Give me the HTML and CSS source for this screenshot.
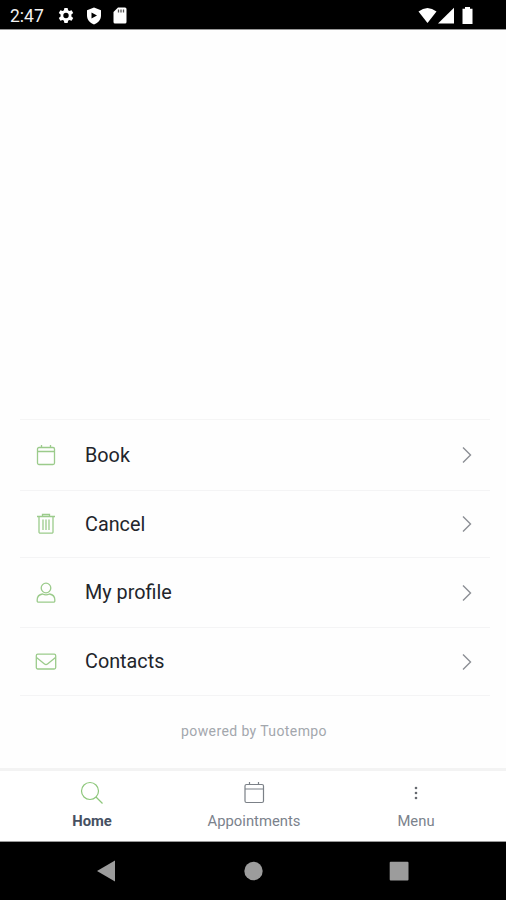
FILE: index.html
```html
<!DOCTYPE html>
<html lang="en">

<head>
    <meta charset="UTF-8">
    <meta name="viewport" content="width=device-width, initial-scale=1.0">
    <title>Home</title>
    <link rel="stylesheet" href="styles.css">
</head>

<body>

    <div class="status-bar">
        <span class="status-time">2:47</span>
        <div class="status-left">
            <svg width="18" height="18" viewBox="0 0 18 18">
                <path d="M7.4 1h3.2l.5 2.3 1.2.7 2.3-.8 1.6 2.8-1.8 1.6v1.8l1.8 1.6-1.6 2.8-2.3-.8-1.2.7-.5 2.3H7.4l-.5-2.3-1.2-.7-2.3.8L1.8 11l1.8-1.6V7.6L1.8 6l1.6-2.8 2.3.8 1.2-.7z M9 5.8a2.7 2.7 0 1 0 0 5.4 2.7 2.7 0 0 0 0-5.4z" fill="#fff" fill-rule="evenodd" />
            </svg>
            <svg width="16" height="18" viewBox="0 0 16 18">
                <path d="M8 .5l7 2.7v5.3c0 4.2-2.8 7.4-7 9-4.2-1.6-7-4.8-7-9V3.2z M5.5 5.5v6l5.5-3z" fill="#fff" fill-rule="evenodd" />
            </svg>
            <svg width="14" height="17" viewBox="0 0 14 17">
                <path d="M5 .5h7A1.5 1.5 0 0 1 13.5 2v13a1.5 1.5 0 0 1-1.5 1.5H2A1.5 1.5 0 0 1 .5 15V5z" fill="#fff" />
                <path d="M5.5 2.500v3M8 2.500v3M10.500 2.500v3" stroke="#555" stroke-width="1.3" />
            </svg>
        </div>
        <div class="status-right">
            <svg width="56" height="18" viewBox="0 0 56 18">
                <path d="M.5 4.500Q9.500-2.500 18.500 4.500L9.500 16z" fill="#fff" />
                <path d="M36 .8V16.500H20z" fill="#fff" />
                <path d="M47 0h5v1.800h2.500V17H44.500V1.800H47z" fill="#fff" />
            </svg>
        </div>
    </div>

    <div class="content">
        <ul class="menu-list">
            <li class="menu-item">
                <svg class="menu-icon" width="22" height="22" viewBox="0 0 22 22">
                    <rect x="2.5" y="3.500" width="17" height="17" rx="1.5" />
                    <path d="M2.5 7.500h17M6.500 1v2.500M15.500 1v2.500" />
                </svg>
                <span class="menu-label">Book</span>
                <svg class="chevron" width="10" height="18" viewBox="0 0 10 18"><path d="M1 1.500L8.500 9 1 16.500" /></svg>
            </li>
            <li class="menu-item">
                <svg class="menu-icon" width="22" height="22" viewBox="0 0 22 22">
                    <path d="M2 3.500h18M7.500 3.500V1.500h7v2M4 3.500v15.500a1.200 1.200 0 0 0 1.200 1.200h11.600a1.200 1.200 0 0 0 1.200-1.200V3.500M8 6.500v10.500M11 6.500v10.500M14 6.500v10.500" />
                </svg>
                <span class="menu-label">Cancel</span>
                <svg class="chevron" width="10" height="18" viewBox="0 0 10 18"><path d="M1 1.500L8.500 9 1 16.500" /></svg>
            </li>
            <li class="menu-item">
                <svg class="menu-icon" width="22" height="22" viewBox="0 0 22 22">
                    <circle cx="11" cy="6" r="4.800" />
                    <path d="M7.500 12c-3.500.6-5.300 2.800-5.300 5.800V19a1.200 1.200 0 0 0 1.200 1.200h15.200a1.200 1.200 0 0 0 1.200-1.200v-1.200c0-3-1.800-5.200-5.300-5.800q-3.500 1.800-7 0z" />
                </svg>
                <span class="menu-label">My profile</span>
                <svg class="chevron" width="10" height="18" viewBox="0 0 10 18"><path d="M1 1.500L8.500 9 1 16.500" /></svg>
            </li>
            <li class="menu-item">
                <svg class="menu-icon" width="22" height="22" viewBox="0 0 22 22">
                    <rect x="1.300" y="3.200" width="19.400" height="14.800" rx="1.5" />
                    <path d="M1.500 6.500l8 6.500q1.500 1.200 3 0l8-6.500" />
                </svg>
                <span class="menu-label">Contacts</span>
                <svg class="chevron" width="10" height="18" viewBox="0 0 10 18"><path d="M1 1.500L8.500 9 1 16.500" /></svg>
            </li>
        </ul>
        <p class="powered">powered by Tuotempo</p>
    </div>

    <nav class="tab-bar">
        <a class="tab active">
            <svg class="tab-icon" width="24" height="24" viewBox="0 0 24 24">
                <circle cx="10" cy="10" r="8.500" />
                <path d="M16 16l6.500 6.500" />
            </svg>
            <span>Home</span>
        </a>
        <a class="tab">
            <svg class="tab-icon" width="24" height="24" viewBox="0 0 24 24">
                <rect x="3" y="3.500" width="18.500" height="18" rx="1.5" />
                <path d="M3 8h18.500M7.500 1v2.500M16.500 1v2.500" />
            </svg>
            <span>Appointments</span>
        </a>
        <a class="tab">
            <svg class="tab-icon dots" width="24" height="24" viewBox="0 0 24 24">
                <circle cx="12" cy="7" r="1.300" />
                <circle cx="12" cy="12" r="1.300" />
                <circle cx="12" cy="17" r="1.300" />
            </svg>
            <span>Menu</span>
        </a>
    </nav>

    <div class="system-bar">
        <svg width="20" height="22" viewBox="0 0 20 22"><path d="M1 11L19 .5v21z" /></svg>
        <svg width="20" height="22" viewBox="0 0 20 22"><circle cx="10.500" cy="11" r="9.200" /></svg>
        <svg width="20" height="22" viewBox="0 0 20 22"><rect x=".7" y="1.700" width="18.800" height="18.800" rx="1" /></svg>
    </div>

</body>

</html>
```
FILE: styles.css
```css
body {
    font-family: Roboto, Arial, sans-serif;
    background-color: #fefefe;
    margin: 0;
    height: 900px;
    display: flex;
    flex-direction: column;
    overflow: hidden;
}

svg {
    display: block;
    flex: none;
}

.status-bar {
    display: flex;
    align-items: center;
    box-sizing: border-box;
    height: 30px;
    padding: 2px 32px 0 10px;
    background-color: #000;
    border-bottom: 1px solid #989898;
    color: #f2f2f2;
}

.status-time {
    width: 47px;
    font-size: 17.5px;
    line-height: 20px;
    padding-top: 1px;
}

.status-left {
    display: flex;
    align-items: center;
    gap: 11px;
}

.status-right {
    margin-left: auto;
}

.content {
    flex: 1;
    display: flex;
    flex-direction: column;
    justify-content: flex-end;
    padding: 0 16px 0 20px;
}

.menu-list {
    display: grid;
    grid-template-rows: 71px 67px 70px 68px;
    list-style: none;
    margin: 0;
    padding: 0;
    border-top: 1px solid #f5f5f5;
}

.menu-item {
    display: flex;
    align-items: center;
    padding: 0 18px 0 15px;
    border-bottom: 1px solid #f4f4f5;
}

.menu-icon {
    fill: none;
    stroke: #9bcb8b;
    stroke-width: 1.3;
}

.menu-label {
    margin-left: 28px;
    font-size: 19.8px;
    color: #22252b;
}

.chevron {
    margin-left: auto;
    fill: none;
    stroke: #8b8e94;
    stroke-width: 1.4;
}

.powered {
    margin: 25px 0 27px;
    padding-right: 2px;
    font-size: 14px;
    line-height: 20px;
    letter-spacing: 0.4px;
    text-align: center;
    color: #a3a7ad;
}

.tab-bar {
    display: flex;
    box-sizing: border-box;
    height: 74px;
    padding: 10px 9px 0 11px;
    background-color: #fff;
    border-top: 3px solid #f3f3f3;
    border-bottom: 1px solid #999;
}

.tab {
    flex: 1;
    display: flex;
    flex-direction: column;
    align-items: center;
    gap: 6px;
    font-size: 14.8px;
    line-height: 20px;
    color: #7b828c;
}

.tab-icon {
    fill: none;
    stroke: #7b8087;
    stroke-width: 1.2;
}

.tab.active {
    color: #465062;
    font-weight: 700;
}

.tab.active .tab-icon {
    stroke: #8dc77b;
}

.tab .dots {
    fill: #666a70;
    stroke: none;
}

.system-bar {
    display: flex;
    align-items: center;
    justify-content: space-between;
    box-sizing: border-box;
    height: 58px;
    padding: 0 97px 0 96px;
    background-color: #000;
    fill: #9c9c9c;
}
```
